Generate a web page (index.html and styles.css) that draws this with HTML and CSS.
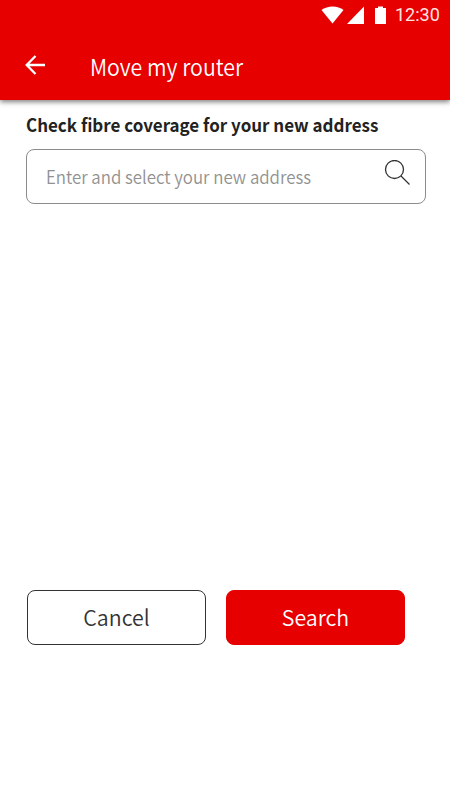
FILE: index.html
```html
<!DOCTYPE html>
<html lang="en">
<head>
<meta charset="utf-8">
<title>Move my router</title>
<link rel="stylesheet" href="styles.css">
</head>
<body>
<div class="screen">
  <header class="header">
    <div class="status">
      <svg class="status-icons" width="66" height="20" viewBox="0 0 66 20" fill="#fff">
        <path d="M.5 5C6.500 .2 17 .2 22.500 5L11.500 18.500Z"/>
        <path d="M43 1.500V19H26Z"/>
        <path d="M54 3h3V1.500h5V3h3V19H54Z"/>
      </svg>
      <span class="clock">12:30</span>
    </div>
    <div class="appbar">
      <svg class="back" width="20" height="20" viewBox="0 0 20 20" fill="none" stroke="#fff" stroke-width="2.300"><path d="M20 10H2M10.500 1L1.700 10L10.500 19"/></svg>
      <h1 class="title">Move my router</h1>
    </div>
  </header>
  <main class="main">
    <h2 class="heading">Check fibre coverage for your new address</h2>
    <div class="field">
      <span class="placeholder">Enter and select your new address</span>
      <svg class="search-icon" width="27" height="27" viewBox="0 0 27 27" fill="none" stroke="#333" stroke-width="1.300"><circle cx="10.500" cy="9.500" r="9"/><path d="M17 16L25.500 24.500"/></svg>
    </div>
    <div class="actions">
      <button class="button cancel"><span class="label">Cancel</span></button>
      <button class="button search"><span class="label">Search</span></button>
    </div>
  </main>
</div>
</body>
</html>
```

FILE: styles.css
```css
* { box-sizing: border-box; }
body { margin: 0; background: #fff; font-family: "Noto Sans CJK SC", "Noto Sans", sans-serif; }
.screen { width: 450px; height: 800px; overflow: hidden; }
.header { height: 100px; background: #e60000; color: #fff; box-shadow: 0 2px 5px rgba(0, 0, 0, .5); }
.status { display: flex; height: 30px; padding: 5px 0 0 321px; }
.status-icons { flex: none; }
.clock { margin-left: 8px; font: 18px/20px Roboto, sans-serif; color: #ffe5e2; }
.appbar { display: flex; height: 70px; padding: 25px 0 0 25px; }
.back { flex: none; }
.title { margin: -4px 0 0 45px; font-size: 23px; line-height: 30px; font-weight: 350; white-space: nowrap; transform: scaleX(.925); transform-origin: left; }
.main { padding: 12px 24px 0 26px; }
.heading { margin: 0; font-size: 18px; line-height: 24px; font-weight: 700; color: #222; white-space: nowrap; transform: scaleX(.943); transform-origin: left; }
.field { display: flex; height: 55px; margin-top: 13px; padding: 0 14px 0 19px; border: 1px solid #8c8c8c; border-radius: 8px; justify-content: space-between; }
.placeholder { font-size: 18px; line-height: 53px; font-weight: 350; color: #919191; white-space: nowrap; transform: scaleX(.935); transform-origin: left; }
.search-icon { flex: none; margin-top: 10px; }
.actions { display: flex; gap: 20px; margin: 386px 0 0 1px; }
.button { width: 179px; height: 55px; padding: 0; border: 1px solid #333; border-radius: 8px; background: #fff; color: #333; font: 350 22px/51px "Noto Sans CJK SC", "Noto Sans", sans-serif; }
.search { border-color: #e60000; background: #e60000; color: #fff; }
.label { display: block; margin-bottom: 2px; transform: scaleX(.97); }
```
